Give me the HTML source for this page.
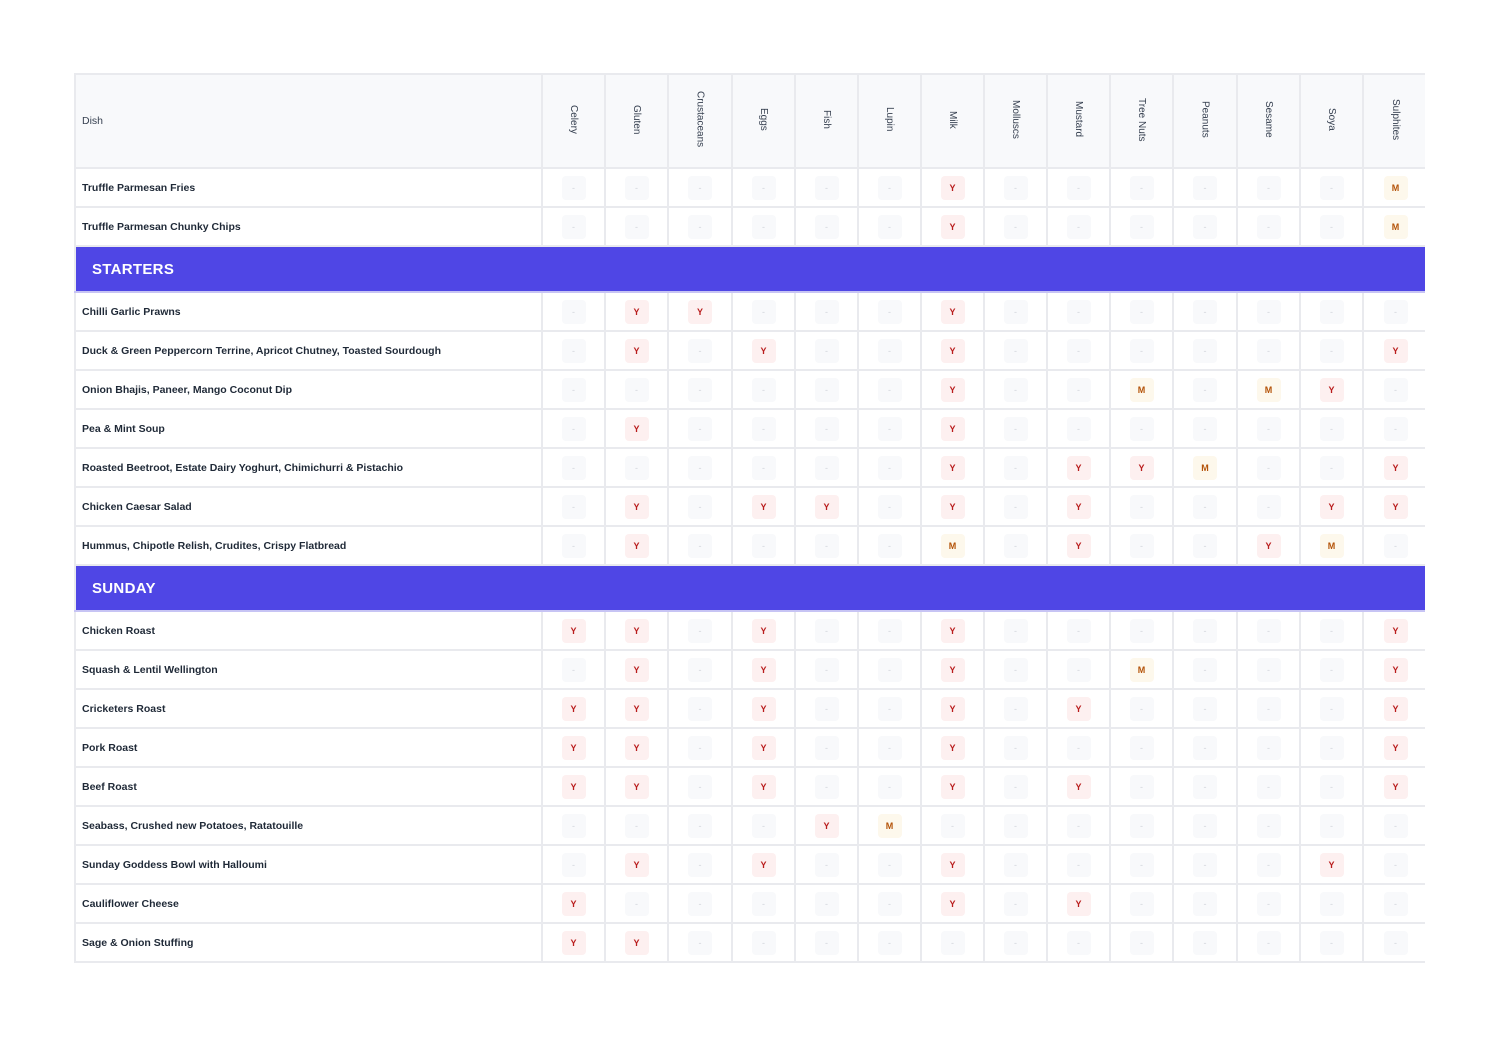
<!DOCTYPE html>
<html><head><meta charset="utf-8"><style>
*{margin:0;padding:0;box-sizing:border-box}
body{width:1498px;height:1056px;background:#fff;font-family:"Liberation Sans",sans-serif;color:#1f2937;overflow:hidden;position:relative}
.wrap{position:absolute;left:74px;top:73px;width:1351px;overflow:hidden}
table{border-collapse:collapse;table-layout:fixed;width:1353px}
td,th{border:2px solid #e9eaee;text-align:center;vertical-align:middle;padding:0}
th{background:#f8f9fb;height:94px;font-weight:normal;font-size:10px;color:#374151}
th.dish{text-align:left;padding-left:6px;font-size:10.5px}
th span{writing-mode:vertical-rl;display:inline-block}
td{height:39px;font-size:10.5px}
td.n{text-align:left;padding-left:6px;font-weight:bold;font-size:10.5px;color:#1f2937}
td i{display:inline-block;width:24px;height:24px;line-height:24px;border-radius:4px;font-style:normal;font-weight:bold;font-size:9px}
i.d{background:#f8f9fb;color:#d1d5db;font-weight:normal}
i.y{background:#fdf0f0;color:#b91c1c}
i.m{background:#fdf8ec;color:#b45309}
tr.s td{height:46px;background:#4f46e5;color:#fff;font-weight:bold;font-size:15px;text-align:left;padding-left:16px;letter-spacing:0.3px;border-color:#e9eaee;border-bottom:2px solid #c7c4f4}
</style></head><body>
<div class="wrap"><table>
<colgroup><col style="width:467px"><col style="width:63px"><col style="width:63px"><col style="width:64px"><col style="width:63px"><col style="width:63px"><col style="width:63px"><col style="width:63px"><col style="width:63px"><col style="width:63px"><col style="width:63px"><col style="width:64px"><col style="width:63px"><col style="width:63px"><col style="width:65px"></colgroup>
<tr><th class="dish">Dish</th><th><span>Celery</span></th><th><span>Gluten</span></th><th><span>Crustaceans</span></th><th><span>Eggs</span></th><th><span>Fish</span></th><th><span>Lupin</span></th><th><span>Milk</span></th><th><span>Molluscs</span></th><th><span>Mustard</span></th><th><span>Tree Nuts</span></th><th><span>Peanuts</span></th><th><span>Sesame</span></th><th><span>Soya</span></th><th><span>Sulphites</span></th></tr>
<tr><td class="n">Truffle Parmesan Fries</td><td><i class="d">-</i></td><td><i class="d">-</i></td><td><i class="d">-</i></td><td><i class="d">-</i></td><td><i class="d">-</i></td><td><i class="d">-</i></td><td><i class="y">Y</i></td><td><i class="d">-</i></td><td><i class="d">-</i></td><td><i class="d">-</i></td><td><i class="d">-</i></td><td><i class="d">-</i></td><td><i class="d">-</i></td><td><i class="m">M</i></td></tr>
<tr><td class="n">Truffle Parmesan Chunky Chips</td><td><i class="d">-</i></td><td><i class="d">-</i></td><td><i class="d">-</i></td><td><i class="d">-</i></td><td><i class="d">-</i></td><td><i class="d">-</i></td><td><i class="y">Y</i></td><td><i class="d">-</i></td><td><i class="d">-</i></td><td><i class="d">-</i></td><td><i class="d">-</i></td><td><i class="d">-</i></td><td><i class="d">-</i></td><td><i class="m">M</i></td></tr>
<tr class="s"><td colspan="15">STARTERS</td></tr>
<tr><td class="n">Chilli Garlic Prawns</td><td><i class="d">-</i></td><td><i class="y">Y</i></td><td><i class="y">Y</i></td><td><i class="d">-</i></td><td><i class="d">-</i></td><td><i class="d">-</i></td><td><i class="y">Y</i></td><td><i class="d">-</i></td><td><i class="d">-</i></td><td><i class="d">-</i></td><td><i class="d">-</i></td><td><i class="d">-</i></td><td><i class="d">-</i></td><td><i class="d">-</i></td></tr>
<tr><td class="n">Duck &amp; Green Peppercorn Terrine, Apricot Chutney, Toasted Sourdough</td><td><i class="d">-</i></td><td><i class="y">Y</i></td><td><i class="d">-</i></td><td><i class="y">Y</i></td><td><i class="d">-</i></td><td><i class="d">-</i></td><td><i class="y">Y</i></td><td><i class="d">-</i></td><td><i class="d">-</i></td><td><i class="d">-</i></td><td><i class="d">-</i></td><td><i class="d">-</i></td><td><i class="d">-</i></td><td><i class="y">Y</i></td></tr>
<tr><td class="n">Onion Bhajis, Paneer, Mango Coconut Dip</td><td><i class="d">-</i></td><td><i class="d">-</i></td><td><i class="d">-</i></td><td><i class="d">-</i></td><td><i class="d">-</i></td><td><i class="d">-</i></td><td><i class="y">Y</i></td><td><i class="d">-</i></td><td><i class="d">-</i></td><td><i class="m">M</i></td><td><i class="d">-</i></td><td><i class="m">M</i></td><td><i class="y">Y</i></td><td><i class="d">-</i></td></tr>
<tr><td class="n">Pea &amp; Mint Soup</td><td><i class="d">-</i></td><td><i class="y">Y</i></td><td><i class="d">-</i></td><td><i class="d">-</i></td><td><i class="d">-</i></td><td><i class="d">-</i></td><td><i class="y">Y</i></td><td><i class="d">-</i></td><td><i class="d">-</i></td><td><i class="d">-</i></td><td><i class="d">-</i></td><td><i class="d">-</i></td><td><i class="d">-</i></td><td><i class="d">-</i></td></tr>
<tr><td class="n">Roasted Beetroot, Estate Dairy Yoghurt, Chimichurri &amp; Pistachio</td><td><i class="d">-</i></td><td><i class="d">-</i></td><td><i class="d">-</i></td><td><i class="d">-</i></td><td><i class="d">-</i></td><td><i class="d">-</i></td><td><i class="y">Y</i></td><td><i class="d">-</i></td><td><i class="y">Y</i></td><td><i class="y">Y</i></td><td><i class="m">M</i></td><td><i class="d">-</i></td><td><i class="d">-</i></td><td><i class="y">Y</i></td></tr>
<tr><td class="n">Chicken Caesar Salad</td><td><i class="d">-</i></td><td><i class="y">Y</i></td><td><i class="d">-</i></td><td><i class="y">Y</i></td><td><i class="y">Y</i></td><td><i class="d">-</i></td><td><i class="y">Y</i></td><td><i class="d">-</i></td><td><i class="y">Y</i></td><td><i class="d">-</i></td><td><i class="d">-</i></td><td><i class="d">-</i></td><td><i class="y">Y</i></td><td><i class="y">Y</i></td></tr>
<tr><td class="n">Hummus, Chipotle Relish, Crudites, Crispy Flatbread</td><td><i class="d">-</i></td><td><i class="y">Y</i></td><td><i class="d">-</i></td><td><i class="d">-</i></td><td><i class="d">-</i></td><td><i class="d">-</i></td><td><i class="m">M</i></td><td><i class="d">-</i></td><td><i class="y">Y</i></td><td><i class="d">-</i></td><td><i class="d">-</i></td><td><i class="y">Y</i></td><td><i class="m">M</i></td><td><i class="d">-</i></td></tr>
<tr class="s"><td colspan="15">SUNDAY</td></tr>
<tr><td class="n">Chicken Roast</td><td><i class="y">Y</i></td><td><i class="y">Y</i></td><td><i class="d">-</i></td><td><i class="y">Y</i></td><td><i class="d">-</i></td><td><i class="d">-</i></td><td><i class="y">Y</i></td><td><i class="d">-</i></td><td><i class="d">-</i></td><td><i class="d">-</i></td><td><i class="d">-</i></td><td><i class="d">-</i></td><td><i class="d">-</i></td><td><i class="y">Y</i></td></tr>
<tr><td class="n">Squash &amp; Lentil Wellington</td><td><i class="d">-</i></td><td><i class="y">Y</i></td><td><i class="d">-</i></td><td><i class="y">Y</i></td><td><i class="d">-</i></td><td><i class="d">-</i></td><td><i class="y">Y</i></td><td><i class="d">-</i></td><td><i class="d">-</i></td><td><i class="m">M</i></td><td><i class="d">-</i></td><td><i class="d">-</i></td><td><i class="d">-</i></td><td><i class="y">Y</i></td></tr>
<tr><td class="n">Cricketers Roast</td><td><i class="y">Y</i></td><td><i class="y">Y</i></td><td><i class="d">-</i></td><td><i class="y">Y</i></td><td><i class="d">-</i></td><td><i class="d">-</i></td><td><i class="y">Y</i></td><td><i class="d">-</i></td><td><i class="y">Y</i></td><td><i class="d">-</i></td><td><i class="d">-</i></td><td><i class="d">-</i></td><td><i class="d">-</i></td><td><i class="y">Y</i></td></tr>
<tr><td class="n">Pork Roast</td><td><i class="y">Y</i></td><td><i class="y">Y</i></td><td><i class="d">-</i></td><td><i class="y">Y</i></td><td><i class="d">-</i></td><td><i class="d">-</i></td><td><i class="y">Y</i></td><td><i class="d">-</i></td><td><i class="d">-</i></td><td><i class="d">-</i></td><td><i class="d">-</i></td><td><i class="d">-</i></td><td><i class="d">-</i></td><td><i class="y">Y</i></td></tr>
<tr><td class="n">Beef Roast</td><td><i class="y">Y</i></td><td><i class="y">Y</i></td><td><i class="d">-</i></td><td><i class="y">Y</i></td><td><i class="d">-</i></td><td><i class="d">-</i></td><td><i class="y">Y</i></td><td><i class="d">-</i></td><td><i class="y">Y</i></td><td><i class="d">-</i></td><td><i class="d">-</i></td><td><i class="d">-</i></td><td><i class="d">-</i></td><td><i class="y">Y</i></td></tr>
<tr><td class="n">Seabass, Crushed new Potatoes, Ratatouille</td><td><i class="d">-</i></td><td><i class="d">-</i></td><td><i class="d">-</i></td><td><i class="d">-</i></td><td><i class="y">Y</i></td><td><i class="m">M</i></td><td><i class="d">-</i></td><td><i class="d">-</i></td><td><i class="d">-</i></td><td><i class="d">-</i></td><td><i class="d">-</i></td><td><i class="d">-</i></td><td><i class="d">-</i></td><td><i class="d">-</i></td></tr>
<tr><td class="n">Sunday Goddess Bowl with Halloumi</td><td><i class="d">-</i></td><td><i class="y">Y</i></td><td><i class="d">-</i></td><td><i class="y">Y</i></td><td><i class="d">-</i></td><td><i class="d">-</i></td><td><i class="y">Y</i></td><td><i class="d">-</i></td><td><i class="d">-</i></td><td><i class="d">-</i></td><td><i class="d">-</i></td><td><i class="d">-</i></td><td><i class="y">Y</i></td><td><i class="d">-</i></td></tr>
<tr><td class="n">Cauliflower Cheese</td><td><i class="y">Y</i></td><td><i class="d">-</i></td><td><i class="d">-</i></td><td><i class="d">-</i></td><td><i class="d">-</i></td><td><i class="d">-</i></td><td><i class="y">Y</i></td><td><i class="d">-</i></td><td><i class="y">Y</i></td><td><i class="d">-</i></td><td><i class="d">-</i></td><td><i class="d">-</i></td><td><i class="d">-</i></td><td><i class="d">-</i></td></tr>
<tr><td class="n">Sage &amp; Onion Stuffing</td><td><i class="y">Y</i></td><td><i class="y">Y</i></td><td><i class="d">-</i></td><td><i class="d">-</i></td><td><i class="d">-</i></td><td><i class="d">-</i></td><td><i class="d">-</i></td><td><i class="d">-</i></td><td><i class="d">-</i></td><td><i class="d">-</i></td><td><i class="d">-</i></td><td><i class="d">-</i></td><td><i class="d">-</i></td><td><i class="d">-</i></td></tr>
</table></div>
</body></html>
